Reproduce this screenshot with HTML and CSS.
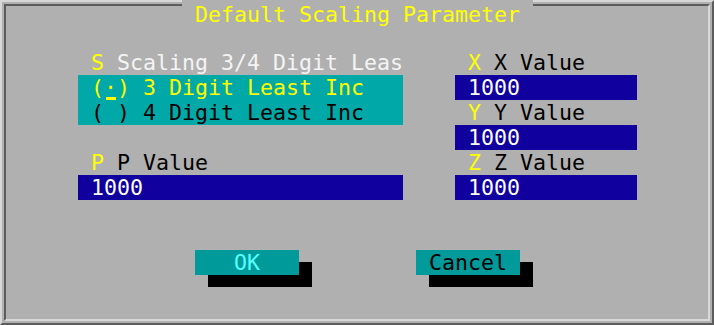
FILE: index.html
```html
<!DOCTYPE html>
<html>
  <head>
    <title>Default Scaling Parameter</title>
    <link rel="stylesheet" href="styles.css">
  </head>
  <body>
    <div class="window">
      <div class="title">Default Scaling Parameter</div>
      <div class="frame">
        <div class="columns">
          <div class="col left">
            <div class="line light"><span class="hot">S</span> Scaling 3/4 Digit Leas</div>
            <div class="radios">
              <div class="line on">(<span class="cursor">·</span>) 3 Digit Least Inc</div>
              <div class="line">( ) 4 Digit Least Inc</div>
            </div>
            <div class="blank"></div>
            <div class="line"><span class="hot">P</span> P Value</div>
            <div class="field">1000</div>
          </div>
          <div class="col right">
            <div class="line"><span class="hot">X</span> X Value</div>
            <div class="field">1000</div>
            <div class="line"><span class="hot">Y</span> Y Value</div>
            <div class="field">1000</div>
            <div class="line"><span class="hot">Z</span> Z Value</div>
            <div class="field">1000</div>
          </div>
        </div>
        <div class="buttons">
          <div class="btn ok">OK</div>
          <div class="btn">Cancel</div>
        </div>
      </div>
    </div>
  </body>
</html>
```

FILE: styles.css
```css
body {
  margin: 0;
  background: #b0b0b0;
  font-family: "DejaVu Sans Mono", monospace;
  font-size: 21.6px;
  line-height: 24px;
  color: #000;
}
.window {
  position: relative;
  width: 714px;
  height: 325px;
  box-sizing: border-box;
  padding: 2px;
  border: 2px solid;
  border-color: #d8d8d8 #5c5c5c #5c5c5c #d8d8d8;
  background: #b0b0b0;
}
.frame {
  height: 100%;
  box-sizing: border-box;
  border: 2px solid;
  border-color: #5c5c5c #d8d8d8 #d8d8d8 #5c5c5c;
  padding: 44px 0 0 72px;
}
.title {
  position: absolute;
  top: -2px;
  left: 180px;
  width: 351px;
  height: 22px;
  padding-top: 3px;
  background: #b0b0b0;
  color: #ffff00;
  text-align: center;
}
.columns {
  display: flex;
  gap: 52px;
}
.left {
  width: 325px;
}
.right {
  width: 182px;
}
.line {
  height: 24px;
  padding: 1px 0 0 13px;
  white-space: pre;
}
.light {
  color: #f4f4f4;
}
.hot {
  color: #ffff00;
}
.radios {
  background: #00a8a8;
}
.on {
  color: #ffff00;
}
.cursor {
  background: linear-gradient(#ffff00, #ffff00) no-repeat center bottom 0 / 10px 3px;
}
.blank {
  height: 25px;
}
.field {
  height: 24px;
  padding: 1px 0 0 13px;
  background: #10009e;
  color: #fff;
}
.buttons {
  display: flex;
  gap: 117px;
  margin: 50px 0 0 117px;
}
.btn {
  width: 104px;
  height: 24px;
  padding-top: 1px;
  background: #009a9a;
  box-shadow: 13px 12px 0 #000;
  text-align: center;
}
.ok {
  color: #55ffff;
}
```
